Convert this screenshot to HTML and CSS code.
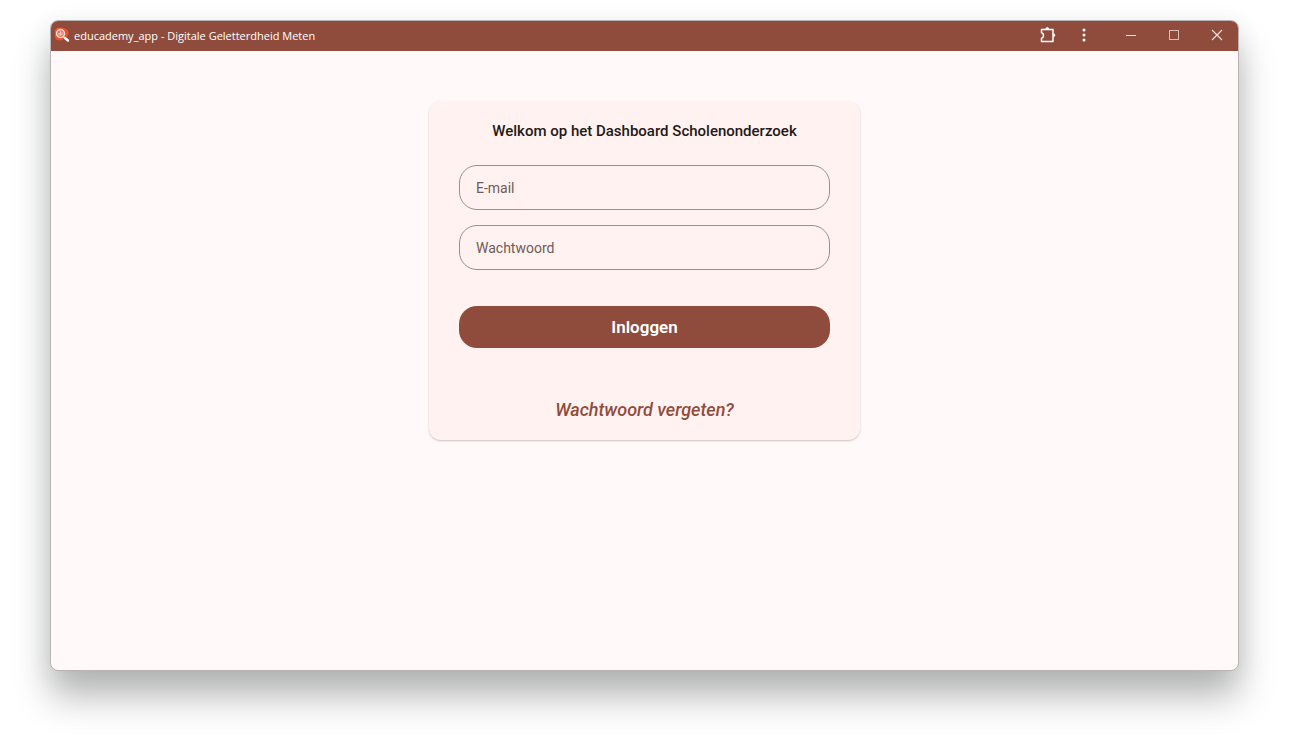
FILE: index.html
```html
<!DOCTYPE html>
<html lang="nl">
<head>
	<meta charset="utf-8">
	<meta name="viewport" content="width=device-width, initial-scale=1">
	<title>educademy_app - Digitale Geletterdheid Meten</title>
	<link rel="stylesheet" href="styles.css">
</head>
<body>

<div class="window">
	<header class="titlebar">
		<svg class="app-icon" width="16" height="16" viewBox="0 0 16 16" aria-hidden="true">
			<path d="M1 3C2 1 4 .5 7 .8c4 0 6.500 1.700 7.500 4.200 .5 2-.5 4-2.500 5.500L9 12.500C6 14 3 13.500 1.500 11.500 .8 9 .5 6 1 3z" fill="#f0522d"/>
			<path d="M9.300 9.500l1.700 1.500" stroke="#e8e4e2" stroke-width="1.200"/>
			<path d="M11 11l3 2.500" stroke="#fff" stroke-width="2.400" stroke-linecap="round"/>
			<circle cx="6.500" cy="6.500" r="4" fill="#ee7662" stroke="#e8e4e2" stroke-width="1.300"/>
			<path d="M5 8.500V6M6.500 8.500V4.500M8 8V5.500" stroke="#f9cfc5" stroke-width="1"/>
		</svg>
		<span class="app-title">educademy_app - Digitale Geletterdheid Meten</span>
		<button class="tool" type="button" aria-label="Extensies">
			<svg width="18" height="18" viewBox="0 0 18 18" fill="none" stroke="#fff" stroke-width="1.500" stroke-linejoin="round">
				<path d="M2.500 3.500H14V15.500H2.500V12.200C5.200 11.600 5.200 7.400 2.500 6.800z"/>
				<path d="M6.500 3C6.500 .8 10 .8 10 3zM14.500 7.500C16.800 7.500 16.800 11 14.500 11z" fill="#fff" stroke="none"/>
			</svg>
		</button>
		<button class="tool" type="button" aria-label="Meer">
			<svg width="18" height="18" viewBox="0 0 18 18" fill="#fff">
				<circle cx="9" cy="4" r="1.500"/>
				<circle cx="9" cy="9" r="1.500"/>
				<circle cx="9" cy="14" r="1.500"/>
			</svg>
		</button>
		<div class="window-controls">
			<button class="control" type="button" aria-label="Minimaliseren">
				<svg width="12" height="12" viewBox="0 0 12 12" fill="none" stroke="#f1dfda"><path d="M1 6.500h10"/></svg>
			</button>
			<button class="control" type="button" aria-label="Maximaliseren">
				<svg width="12" height="12" viewBox="0 0 12 12" fill="none" stroke="#d9bdb5"><rect x="1.500" y="1.500" width="9" height="9"/></svg>
			</button>
			<button class="control" type="button" aria-label="Sluiten">
				<svg width="12" height="12" viewBox="0 0 12 12" fill="none" stroke="#f1dfda" stroke-width="1.200"><path d="M1 1l10 10M11 1L1 11"/></svg>
			</button>
		</div>
	</header>

	<main class="content">
		<form class="card">
			<h1>Welkom op het Dashboard Scholenonderzoek</h1>
			<input class="field" type="email" name="email" placeholder="E-mail" aria-label="E-mail">
			<input class="field" type="password" name="password" placeholder="Wachtwoord" aria-label="Wachtwoord">
			<button class="submit" type="submit">Inloggen</button>
			<a class="forgot" href="#">Wachtwoord vergeten?</a>
		</form>
	</main>
</div>

</body>
</html>
```

FILE: styles.css
```css
* {
    box-sizing: border-box;
}
body {
    margin: 0;
    min-height: 100vh;
    padding: 20px 53px 75px 50px;
    display: flex;
    background: #fff;
    font-family: Roboto, Arial, sans-serif;
}
button, input {
    font-family: inherit;
}

.window {
    flex: 1;
    display: flex;
    flex-direction: column;
    border: 1px solid #b9b3b3;
    border-radius: 8px;
    overflow: hidden;
    background: #fff9f9;
    box-shadow: 0 26px 36px rgba(0, 0, 0, 0.28), 0 4px 24px rgba(40, 60, 60, 0.08);
}

/* title bar */
.titlebar {
    display: flex;
    align-items: center;
    height: 30px;
    padding: 0 0 2px 3px;
    background: #8f4c3c;
    color: #fff;
}
.app-icon {
    margin-right: 4px;
}
.app-title {
    flex: 1;
    font-family: "Open Sans", "Noto Sans", sans-serif;
    font-size: 11px;
    white-space: nowrap;
}
.titlebar button {
    display: flex;
    align-items: center;
    justify-content: center;
    height: 28px;
    padding: 0;
    border: 0;
    background: none;
}
.tool {
    width: 36px;
}
.window-controls {
    display: flex;
    margin-left: 7px;
}
.control {
    width: 43px;
}

/* login card */
.content {
    flex: 1;
    padding: 50px 16px;
}
.card {
    display: flex;
    flex-direction: column;
    max-width: 431px;
    margin: 0 auto;
    padding: 20px 30px;
    border-radius: 12px;
    background: #fff2f0;
    box-shadow: 0 1px 2px rgba(60, 30, 20, 0.25);
}
.card h1 {
    margin: 0 0 24px;
    font-size: 15px;
    line-height: 20px;
    font-weight: 500;
    text-align: center;
    color: #231917;
}
.field {
    width: 100%;
    height: 45px;
    margin-bottom: 15px;
    padding: 0 16px;
    border: 1px solid #a08c88;
    border-radius: 18px;
    background: transparent;
    color: #231917;
    font-size: 14px;
}
.field::placeholder {
    color: #6f5b57;
    opacity: 1;
}
.submit {
    height: 42px;
    margin-top: 21px;
    border: 0;
    border-radius: 18px;
    background: #8f4c3c;
    color: #fff;
    font-size: 17px;
    font-weight: 600;
}
.forgot {
    align-self: center;
    margin-top: 52px;
    font-size: 18px;
    line-height: 20px;
    font-weight: 500;
    font-style: italic;
    text-decoration: none;
    color: #8f4c3c;
}
```
